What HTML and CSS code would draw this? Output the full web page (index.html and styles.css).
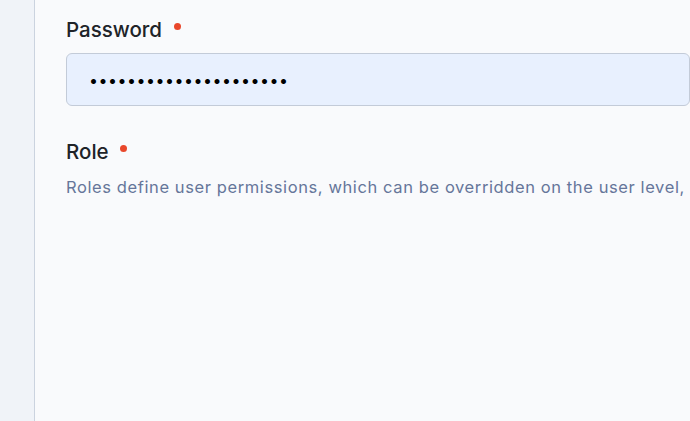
FILE: index.html
```html
<!DOCTYPE html>
<html lang="en">
<head>
    <meta charset="UTF-8">
    <meta name="viewport" content="width=device-width, initial-scale=1.0">
    <title>Edit user</title>
    <link rel="stylesheet" href="styles.css">
</head>
<body>
    <aside class="sidebar"></aside>
    <main class="content">
        <div class="field">
            <label class="field-label" for="password">Password <span class="required"></span></label>
            <input class="field-input" type="password" id="password" value="abcdefghijklmnopqrstu">
        </div>
        <div class="field">
            <label class="field-label">Role <span class="required"></span></label>
            <p class="field-help">Roles define user permissions, which can be overridden on the user level,</p>
        </div>
    </main>
</body>
</html>
```

FILE: styles.css
```css
body {
    display: flex;
    height: 100vh;
    margin: 0;
    font-family: Inter, "Noto Sans", sans-serif;
    background-color: #f9fafc;
    overflow: hidden;
}

.sidebar {
    width: 34px;
    flex-shrink: 0;
    background-color: #f0f3f8;
    border-right: 1px solid #cbd3df;
}

.content {
    flex: 1;
    min-width: 0;
    padding: 16px 0 0 31px;
}

.field {
    margin-bottom: 32px;
}

.field-label {
    display: block;
    font-size: 20.5px;
    line-height: 28px;
    font-weight: 500;
    color: #202328;
}

.required {
    display: inline-block;
    width: 7px;
    height: 7px;
    margin-left: 6px;
    margin-top: 7px;
    border-radius: 50%;
    background-color: #e9472b;
    vertical-align: top;
}

.field-input {
    display: block;
    box-sizing: border-box;
    width: 624px;
    height: 53px;
    margin-top: 9px;
    padding: 0 22px;
    font-family: Inter, sans-serif;
    font-size: 16px;
    letter-spacing: 0.5px;
    color: #000;
    background-color: #e8f0fe;
    border: 1px solid #c3cbd8;
    border-radius: 6px;
    outline: none;
}

.field-help {
    margin: 9px 0 0;
    font-size: 16.5px;
    line-height: 24px;
    letter-spacing: 0.6px;
    color: #66769a;
    white-space: nowrap;
}
```
